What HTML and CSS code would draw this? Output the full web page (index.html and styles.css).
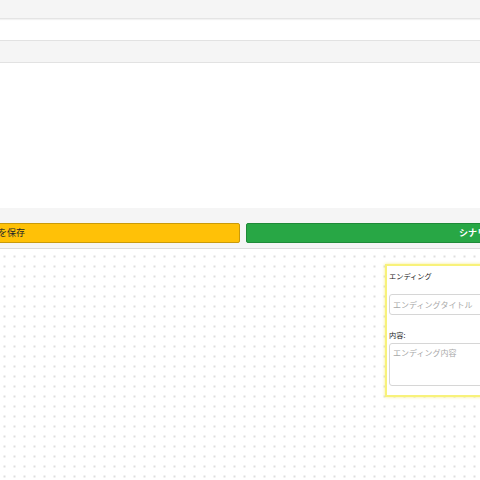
FILE: index.html
```html
<!DOCTYPE html>
<html>

<head>
    <title>シナリオエディタ</title>
    <link rel="stylesheet" href="styles.css">
</head>

<body>
    <div class="page">
        <div class="bar bar-top"></div>
        <div class="bar bar-second"></div>
        <div class="editor"></div>

        <div class="actions">
            <div class="action-row">
                <button class="btn btn-save">シナリオを保存</button>
                <button class="btn btn-run">シナリオを実行</button>
            </div>
        </div>

        <div class="canvas">
            <div class="node node-ending">
                <div class="node-title">エンディング</div>
                <input type="text" class="field" placeholder="エンディングタイトル">
                <label class="field-label">内容:</label>
                <textarea class="field field-area" placeholder="エンディング内容"></textarea>
            </div>
        </div>
    </div>
</body>

</html>
```

FILE: styles.css
```css
html, body {
    margin: 0;
    height: 100%;
    overflow: hidden;
    background: #fff;
    font-family: "Noto Sans CJK JP", "Noto Sans", sans-serif;
}

.page {
    display: flex;
    flex-direction: column;
    height: 100%;
}

.bar {
    background-color: #f5f5f5;
}
.bar-top {
    height: 18px;
    border-bottom: 1px solid #e4e4e4;
    box-shadow: 0 1px 1px rgba(0, 0, 0, 0.05);
}
.bar-second {
    margin-top: 21px;
    height: 21px;
    border-top: 1px solid #e2e2e2;
    border-bottom: 1px solid #e2e2e2;
}

.editor {
    height: 145px;
}

.actions {
    background-color: #f5f5f5;
    padding: 15px 0 5px;
    border-bottom: 1px solid #dcdcdc;
}
.action-row {
    display: flex;
    gap: 6px;
    width: 988px;
    margin-left: -253px;
}
.btn {
    height: 20px;
    padding: 0;
    border-radius: 2px;
    font-family: inherit;
    font-size: 9px;
    line-height: 18px;
    cursor: pointer;
}
.btn-save {
    width: 493px;
    background-color: #ffc107;
    border: 1px solid #c99a0a;
    color: #212529;
}
.btn-run {
    width: 489px;
    background-color: #28a745;
    border: 1px solid #1f8a38;
    color: #fff;
    font-weight: bold;
}

.canvas {
    position: relative;
    flex: 1;
    margin-top: 1px;
    background-image: radial-gradient(circle, #dedede 0.8px, transparent 1.1px);
    background-size: 10px 10px;
    background-position: -0.5px 1.5px;
}

/* nodes are placed on the canvas by their coordinates */
.node {
    position: absolute;
    background: #fff;
    padding: 5px 3px 5px 2px;
    box-sizing: border-box;
}
.node-ending {
    left: 385px;
    top: 14px;
    width: 140px;
    height: 133px;
    border: 2px solid #f8f27a;
    box-shadow: 0 0 3px rgba(240, 225, 60, 0.6);
}
.node-title {
    font-size: 7.2px;
    color: #222;
    line-height: 10px;
}
.field {
    display: block;
    width: 100%;
    box-sizing: border-box;
    margin-top: 13px;
    height: 21px;
    padding: 0 3px;
    border: 1px solid #d6d6d6;
    border-radius: 3px;
    font-family: inherit;
    font-size: 8px;
    color: #333;
}
.field::placeholder {
    color: #a8a8a8;
}
.field-label {
    display: block;
    margin-top: 15px;
    font-size: 7.2px;
    line-height: 10px;
    color: #222;
}
.field-area {
    margin-top: 3px;
    height: 43px;
    padding: 3px 3px;
    resize: none;
}
```
